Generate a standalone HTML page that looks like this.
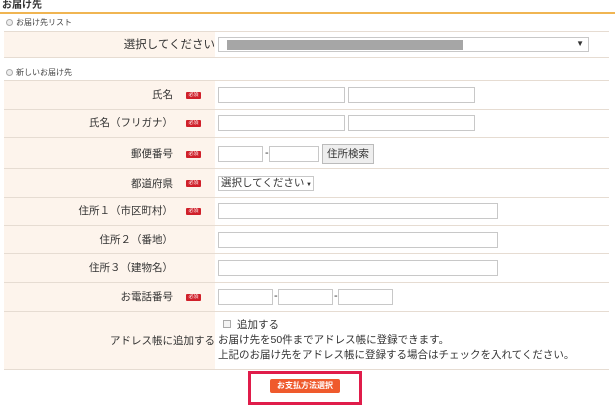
<!DOCTYPE html><html><head><meta charset="utf-8"><style>
*{box-sizing:border-box;margin:0;padding:0}
body{width:615px;height:405px;background:#fff;font-family:"Liberation Sans","Noto Sans CJK JP",sans-serif;font-size:11px;line-height:14px;color:#333;position:relative;overflow:hidden}
.a{position:absolute}
.h{left:2px;top:0px;font-weight:bold;font-size:10px;line-height:11px}
.line{left:0;top:12px;width:615px;height:2px;background:#f0b552}
.rad{font-size:8px;color:#444;line-height:10px}
.rad i{display:inline-block;width:7px;height:7px;border:1px solid #aaa;border-radius:50%;margin-right:3px;vertical-align:-1px;background:#eee}
.row{left:4px;width:605px;border-top:1px solid #e6dcd2;background:#fff}
.lab{position:absolute;left:0;top:0;bottom:0;width:211px;background:#fdf4ec}
.lt{position:absolute;right:436px;text-align:right;white-space:nowrap;font-size:10.5px}
.req{position:absolute;left:182px;width:15px;height:7px;background:#d0202a;border-radius:1px;color:#fff;font-size:5px;line-height:7px;text-align:center;overflow:hidden}
.in{position:absolute;height:16px;border:1px solid #c8c8c8;background:#fff}
</style></head><body>
<div class="a h">お届け先</div>
<div class="a line"></div>
<div class="a rad" style="left:6px;top:18px"><i></i>お届け先リスト</div>
<div class="a row" style="top:31px;height:27px;border-bottom:1px solid #e6dcd2"><div class="lab"></div><div class="lt" style="top:6px;right:394px;font-size:11.5px">選択してください</div>
<div class="in" style="left:214px;top:5px;width:371px;height:15px"><div class="a" style="left:8px;top:2px;width:236px;height:10px;background:#a6a6a6"></div><div class="a" style="right:4px;top:0;font-size:8px;line-height:12px">▼</div></div></div>
<div class="a rad" style="left:6px;top:68px"><i></i>新しいお届け先</div>
<div class="a row" style="top:80px;height:29px"><div class="lab"></div><div class="lt" style="top:7px">氏名</div><div class="req" style="top:11px">必須</div><div class="in" style="left:214px;top:6px;width:127px"></div><div class="in" style="left:344px;top:6px;width:127px"></div></div>
<div class="a row" style="top:109px;height:28px"><div class="lab"></div><div class="lt" style="top:6px">氏名（フリガナ）</div><div class="req" style="top:10px">必須</div><div class="in" style="left:214px;top:5px;width:127px"></div><div class="in" style="left:344px;top:5px;width:127px"></div></div>
<div class="a row" style="top:137px;height:31px"><div class="lab"></div><div class="lt" style="top:9px">郵便番号</div><div class="req" style="top:13px">必須</div><div class="in" style="left:214px;top:8px;width:45px"></div><div class="a" style="left:261px;top:8px">-</div><div class="in" style="left:265px;top:8px;width:50px"></div><div class="in" style="left:318px;top:6px;width:52px;height:20px;background:#eee;border-color:#bbb;text-align:center;line-height:18px;font-size:10.5px">住所検索</div></div>
<div class="a row" style="top:168px;height:29px"><div class="lab"></div><div class="lt" style="top:8px">都道府県</div><div class="req" style="top:11px">必須</div><div class="in" style="left:214px;top:7px;width:96px;height:15px;line-height:13px;padding-left:2px;font-size:10.5px;white-space:nowrap;overflow:hidden">選択してください<span style="font-size:6px"> ▼</span></div></div>
<div class="a row" style="top:197px;height:28px"><div class="lab"></div><div class="lt" style="top:6px">住所１（市区町村）</div><div class="req" style="top:10px">必須</div><div class="in" style="left:214px;top:5px;width:280px"></div></div>
<div class="a row" style="top:225px;height:28px"><div class="lab"></div><div class="lt" style="top:7px">住所２（番地）</div><div class="in" style="left:214px;top:6px;width:280px"></div></div>
<div class="a row" style="top:253px;height:29px"><div class="lab"></div><div class="lt" style="top:7px">住所３（建物名）</div><div class="in" style="left:214px;top:6px;width:280px"></div></div>
<div class="a row" style="top:282px;height:29px"><div class="lab"></div><div class="lt" style="top:7px">お電話番号</div><div class="req" style="top:11px">必須</div><div class="in" style="left:214px;top:6px;width:55px"></div><div class="a" style="left:270px;top:6px">-</div><div class="in" style="left:274px;top:6px;width:55px"></div><div class="a" style="left:330px;top:6px">-</div><div class="in" style="left:334px;top:6px;width:55px"></div></div>
<div class="a row" style="top:311px;height:59px;border-bottom:1px solid #e6dcd2"><div class="lab"></div><div class="lt" style="top:22px;right:394px">アドレス帳に追加する</div>
<div class="a" style="left:214px;top:6px;line-height:15px;font-size:10.5px"><span style="display:inline-block;width:8px;height:8px;border:1px solid #aaa;margin:0 6px 0 5px;background:#f4f4f4"></span>追加する<br>お届け先を50件までアドレス帳に登録できます。<br>上記のお届け先をアドレス帳に登録する場合はチェックを入れてください。</div></div>
<div class="a" style="left:248px;top:371px;width:114px;height:34px;border:3px solid #e01c4a"></div>
<div class="a" style="left:270px;top:379px;width:70px;height:14px;background:#ef5a2c;border-radius:2px;color:#fff;font-size:8px;font-weight:bold;text-align:center;line-height:14px">お支払方法選択</div>
</body></html>
